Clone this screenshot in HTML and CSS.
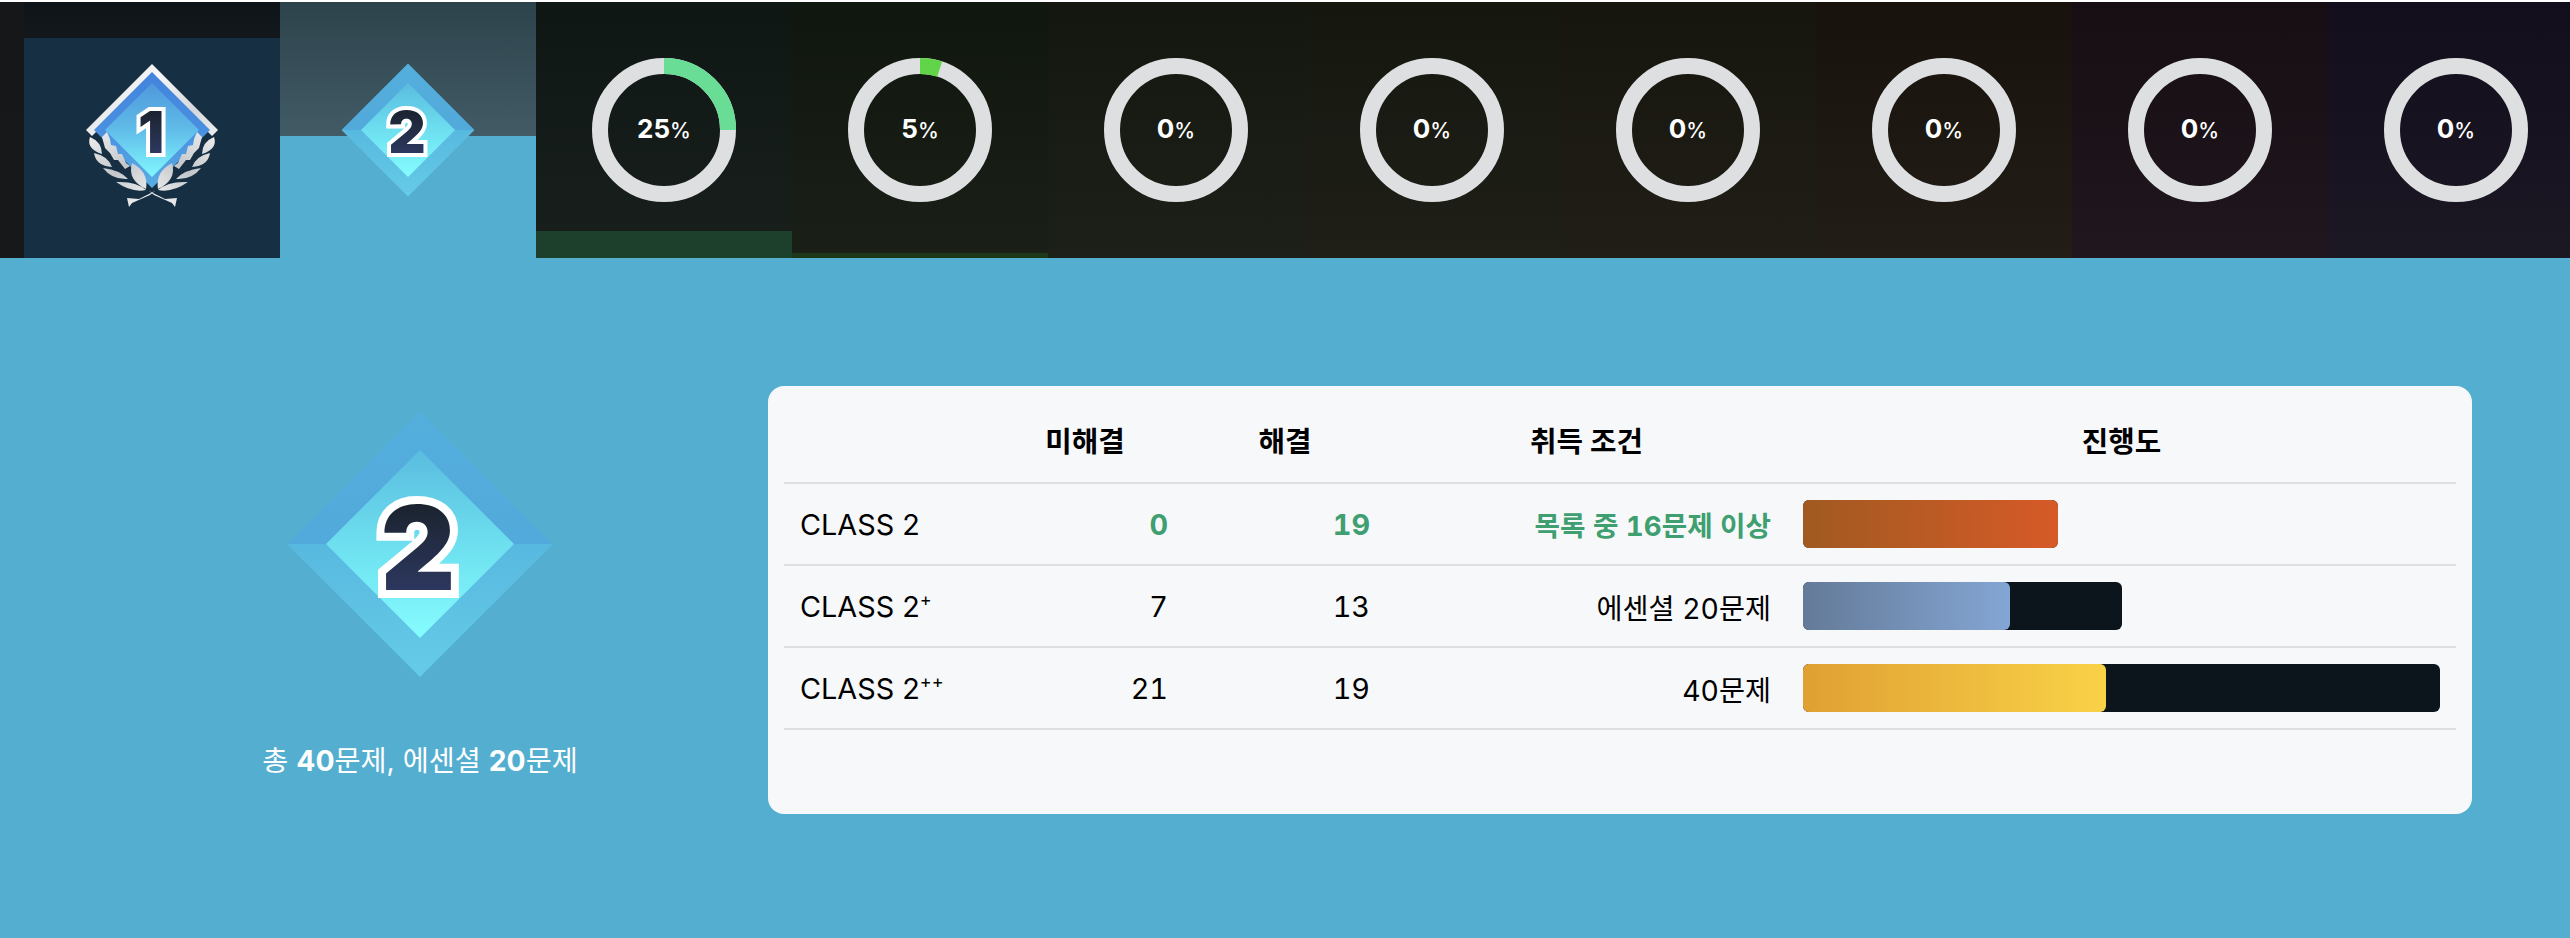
FILE: index.html
```html
<!DOCTYPE html>
<html lang="ko">
<head>
<meta charset="utf-8">
<title>CLASS 2</title>
<link rel="stylesheet" href="styles.css">
</head>
<body>
<svg class="defs" width="0" height="0" aria-hidden="true">
  <defs>
    <linearGradient id="silver" x1="-66" y1="-66" x2="66" y2="30" gradientUnits="userSpaceOnUse">
      <stop offset="0" stop-color="#d4d6d9"/><stop offset=".4" stop-color="#f6f7f8"/><stop offset=".7" stop-color="#d6d8db"/><stop offset="1" stop-color="#f8f8f9"/>
    </linearGradient>
    <linearGradient id="laurel" x1="-60" y1="0" x2="0" y2="76" gradientUnits="userSpaceOnUse">
      <stop offset="0" stop-color="#eeeff0"/><stop offset=".5" stop-color="#c4c7ca"/><stop offset="1" stop-color="#f8f8f9"/>
    </linearGradient>
    <linearGradient id="blueEdge" x1="0" y1="-58" x2="0" y2="58" gradientUnits="userSpaceOnUse">
      <stop offset="0" stop-color="#4383dc"/><stop offset=".5" stop-color="#4a8fe0"/><stop offset="1" stop-color="#58aee4"/>
    </linearGradient>
    <linearGradient id="blueCore" x1="0" y1="-47" x2="0" y2="47" gradientUnits="userSpaceOnUse">
      <stop offset="0" stop-color="#4f98dc"/><stop offset=".5" stop-color="#60bce8"/><stop offset="1" stop-color="#82f9ff"/>
    </linearGradient>
    <linearGradient id="skyEdge" x1="0" y1="-66" x2="0" y2="66" gradientUnits="userSpaceOnUse">
      <stop offset="0" stop-color="#54afdd"/><stop offset=".5" stop-color="#52a9db"/><stop offset=".5" stop-color="#58b9e0"/><stop offset="1" stop-color="#65cbe7"/>
    </linearGradient>
    <linearGradient id="skyCore" x1="0" y1="-47" x2="0" y2="47" gradientUnits="userSpaceOnUse">
      <stop offset="0" stop-color="#5abcdf"/><stop offset=".5" stop-color="#6ddfef"/><stop offset="1" stop-color="#86fdff"/>
    </linearGradient>
    <linearGradient id="digit" x1="0" y1="-22" x2="0" y2="24" gradientUnits="userSpaceOnUse">
      <stop offset="0" stop-color="#1a222c"/><stop offset="1" stop-color="#2d3860"/>
    </linearGradient>
    <g id="leaves">
      <path d="M-62 7Q-66 19-50 24-50 12-62 7Z"/>
      <path d="M-58 23Q-56 36-40 37-44 26-58 23Z"/>
      <path d="M-49 38Q-40 50-24 49-32 40-49 38Z"/>
      <path d="M-36 52Q-20 63-6 60-16 51-36 52Z"/>
      <path d="M-6 59Q-3 42-20 33-25 50-6 59Z"/>
      <path d="M-50 7-45 2-42 9-41 15-36 16-34 24-30 24-26 33-22 36-27 39-34 30-38 30-42 23-47 18Z"/>
      <path d="M3 61-13 69-25 68-23 77-20 73-2 65Z"/>
    </g>
  </defs>
</svg>

<nav class="tabs">
  <a class="tab tab-1" style="--fill:220px">
    <svg class="badge" viewBox="-80 -80 160 160">
      <polygon points="0,-66 66,0 60,6 0,-54 -60,6 -66,0" fill="url(#silver)"/>
      <polygon points="0,-58 58,0 0,58 -58,0" fill="url(#blueEdge)"/>
      <polygon points="0,-47 47,0 0,47 -47,0" fill="url(#blueCore)"/>
      <use href="#leaves" fill="url(#laurel)"/>
      <use href="#leaves" fill="url(#laurel)" transform="scale(-1 1)"/>
      <text class="digit" x="-1" y="23">1</text>
    </svg>
  </a>
  <a class="tab tab-2" style="--fill:122px">
    <svg class="badge" viewBox="-80 -80 160 160">
      <polygon points="0,-66.5 66.5,0 0,66.5 -66.5,0" fill="url(#skyEdge)"/>
      <polygon points="0,-47 47,0 0,47 -47,0" fill="url(#skyCore)"/>
      <text class="digit" x="-1" y="23">2</text>
    </svg>
  </a>
  <a class="tab tab-3" style="--fill:27px">
    <svg class="ring" viewBox="0 0 144 144">
      <circle class="ring-track" cx="72" cy="72" r="64"/>
      <circle class="ring-value ring-a" cx="72" cy="72" r="64" pathLength="100" stroke-dasharray="25 75"/>
      <text class="ring-text" x="72" y="80">25<tspan class="pct">%</tspan></text>
    </svg>
  </a>
  <a class="tab tab-4" style="--fill:5px">
    <svg class="ring" viewBox="0 0 144 144">
      <circle class="ring-track" cx="72" cy="72" r="64"/>
      <circle class="ring-value ring-b" cx="72" cy="72" r="64" pathLength="100" stroke-dasharray="5 95"/>
      <text class="ring-text" x="72" y="80">5<tspan class="pct">%</tspan></text>
    </svg>
  </a>
  <a class="tab tab-5"><svg class="ring" viewBox="0 0 144 144"><circle class="ring-track" cx="72" cy="72" r="64"/><text class="ring-text" x="72" y="80">0<tspan class="pct">%</tspan></text></svg></a>
  <a class="tab tab-6"><svg class="ring" viewBox="0 0 144 144"><circle class="ring-track" cx="72" cy="72" r="64"/><text class="ring-text" x="72" y="80">0<tspan class="pct">%</tspan></text></svg></a>
  <a class="tab tab-7"><svg class="ring" viewBox="0 0 144 144"><circle class="ring-track" cx="72" cy="72" r="64"/><text class="ring-text" x="72" y="80">0<tspan class="pct">%</tspan></text></svg></a>
  <a class="tab tab-8"><svg class="ring" viewBox="0 0 144 144"><circle class="ring-track" cx="72" cy="72" r="64"/><text class="ring-text" x="72" y="80">0<tspan class="pct">%</tspan></text></svg></a>
  <a class="tab tab-9"><svg class="ring" viewBox="0 0 144 144"><circle class="ring-track" cx="72" cy="72" r="64"/><text class="ring-text" x="72" y="80">0<tspan class="pct">%</tspan></text></svg></a>
  <a class="tab tab-10"><svg class="ring" viewBox="0 0 144 144"><circle class="ring-track" cx="72" cy="72" r="64"/><text class="ring-text" x="72" y="80">0<tspan class="pct">%</tspan></text></svg></a>
</nav>

<main class="detail">
  <section class="summary">
    <svg class="summary-badge" viewBox="-66.5 -66.5 133 133">
      <polygon points="0,-66.5 66.5,0 0,66.5 -66.5,0" fill="url(#skyEdge)"/>
      <polygon points="0,-47 47,0 0,47 -47,0" fill="url(#skyCore)"/>
      <text class="digit" x="-1" y="23">2</text>
    </svg>
    <p class="summary-text">총 <b>40</b>문제, 에센셜 <b>20</b>문제</p>
  </section>

  <section class="card">
    <table class="stats">
      <colgroup>
        <col class="c-name"><col class="c-todo"><col class="c-done"><col class="c-cond"><col class="c-prog">
      </colgroup>
      <thead>
        <tr><th></th><th>미해결</th><th>해결</th><th>취득 조건</th><th>진행도</th></tr>
      </thead>
      <tbody>
        <tr class="met">
          <td class="name">CLASS 2</td><td class="num">0</td><td class="num">19</td><td class="num cond">목록 중 16문제 이상</td>
          <td><div class="track" style="width:40%"><div class="bar bronze" style="width:100%"></div></div></td>
        </tr>
        <tr>
          <td class="name">CLASS 2<sup>+</sup></td><td class="num">7</td><td class="num">13</td><td class="num cond">에센셜 20문제</td>
          <td><div class="track" style="width:50%"><div class="bar silver" style="width:65%"></div></div></td>
        </tr>
        <tr>
          <td class="name">CLASS 2<sup>++</sup></td><td class="num">21</td><td class="num">19</td><td class="num cond">40문제</td>
          <td><div class="track" style="width:100%"><div class="bar gold" style="width:47.5%"></div></div></td>
        </tr>
      </tbody>
    </table>
  </section>
</main>
</body>
</html>
```

FILE: styles.css
```css
* { box-sizing: border-box; }

html, body {
  margin: 0;
  height: 100%;
  background: #fff;
}

body {
  padding-top: 2px;
  overflow: hidden;
  font-family: Inter, "Noto Sans CJK KR", sans-serif;
  color: #000;
}

.defs { position: absolute; }

.tabs {
  display: flex;
  height: 256px;
  padding-left: 24px;
  overflow: hidden;
  background: linear-gradient(#151718, #161819);
}

.tab {
  flex: 0 0 256px;
  display: flex;
  align-items: center;
  justify-content: center;
  --fill: 0px;
  --fill-color: transparent;
  --top: #000;
  --end: #000;
  background:
    linear-gradient(to top, var(--fill-color) var(--fill), transparent var(--fill)),
    linear-gradient(var(--top), var(--end));
}

.tab-1 { --top: #0f1418; --end: #2a3138; --fill-color: #162f42; }
.tab-2 { --top: #2d434c; --end: #55707c; --fill-color: #54aed0; }
.tab-3 { --top: #0f1714; --end: #181f1d; --fill-color: #1c402c; }
.tab-4 { --top: #10170f; --end: #1a1f17; --fill-color: #1c3818; }
.tab-5 { --top: #13170f; --end: #1d2018; }
.tab-6 { --top: #15170f; --end: #1f1f18; }
.tab-7 { --top: #16150e; --end: #201e17; }
.tab-8 { --top: #17130c; --end: #221d16; }
.tab-9 { --top: #170e14; --end: #1f171d; }
.tab-10 { --top: #130e1c; --end: #1b1723; }

.badge { width: 160px; height: 160px; overflow: visible; }

.digit {
  font-family: Inter, sans-serif;
  font-size: 58px;
  font-weight: 900;
  text-anchor: middle;
  fill: url(#digit);
  stroke: #fff;
  stroke-width: 8px;
  stroke-linejoin: miter;
  stroke-miterlimit: 6;
  paint-order: stroke;
}

.ring { width: 144px; height: 144px; }

.ring-track,
.ring-value {
  fill: none;
  stroke-width: 16;
}

.ring-track { stroke: #dddfe1; }

.ring-value {
  transform: rotate(-90deg);
  transform-origin: 72px 72px;
}

.ring-a { stroke: #69dc95; }
.ring-b { stroke: #62d44a; }

.ring-text {
  font-size: 26px;
  font-weight: 700;
  fill: #fff;
  text-anchor: middle;
}

.pct { font-size: 21px; font-weight: 500; }

.detail {
  display: flex;
  align-items: center;
  gap: 24px;
  height: 680px;
  padding: 4px 98px 0 96px;
  background: #54aed0;
}

.summary {
  flex: 0 0 648px;
  display: flex;
  flex-direction: column;
  align-items: center;
  padding-bottom: 10px;
}

.summary-badge { width: 266px; height: 266px; }

.summary-text {
  margin: 66px 0 0;
  font-size: 28.3px;
  line-height: 36px;
  color: #fff;
}

.card {
  flex: 1;
  height: 428px;
  padding: 16px;
  border-radius: 16px;
  background: #f7f8fa;
}

.stats {
  width: 100%;
  table-layout: fixed;
  border-collapse: separate;
  border-spacing: 0;
  font-size: 28.8px;
}

.c-name { width: 202px; }
.c-todo { width: 198px; }
.c-done { width: 202px; }
.c-cond { width: 401px; }

.stats th,
.stats td {
  height: 82px;
  padding: 16px;
  border-bottom: 2px solid #dddfe1;
  font-weight: 400;
}

.stats th {
  padding: 14px 16px 19px;
  font-weight: 700;
  text-align: center;
}

.stats .num {
  text-align: right;
  font-variant-numeric: tabular-nums;
}

.stats .cond { font-size: 28.3px; }

.met .num { font-weight: 700; color: #3f9f70; }

.stats .met .cond { font-size: 27.7px; }

sup { font-size: 18px; line-height: 0; }

.track {
  height: 48px;
  border-radius: 6px;
  background: #0c141c;
}

.bar { height: 100%; border-radius: 6px; }
.bronze { background: linear-gradient(90deg, #a05a20, #d65a28); }
.silver { background: linear-gradient(90deg, #647a98, #84a6d4); }
.gold { background: linear-gradient(90deg, #e0a033, #f9d247); }
```
